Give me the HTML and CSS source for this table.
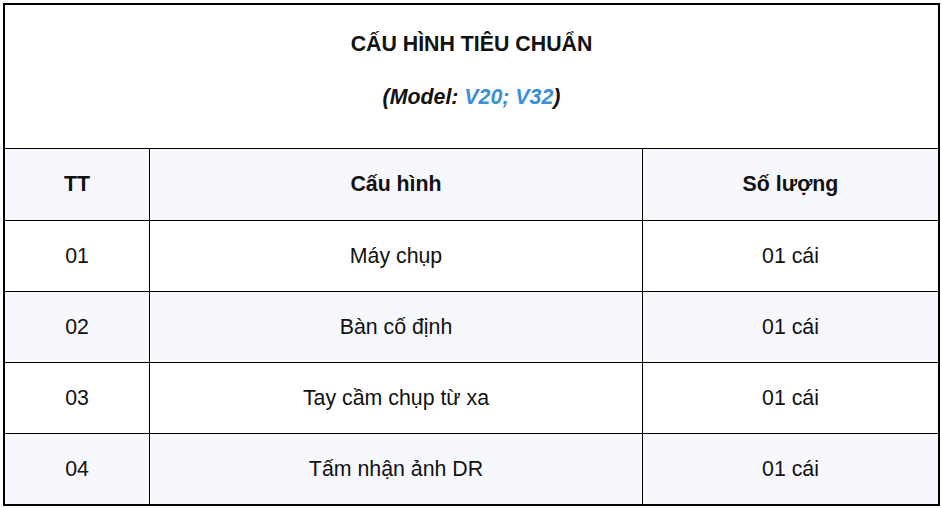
FILE: index.html
```html
<!DOCTYPE html>
<html lang="vi">
<head>
<meta charset="utf-8">
<link rel="stylesheet" href="styles.css">
</head>
<body>
<div class="spec">
  <div class="title">
    <p class="title-main">CẤU HÌNH TIÊU CHUẨN</p>
    <p class="title-sub">(Model: <span class="model">V20; V32</span>)</p>
  </div>
  <div class="grid">
    <div class="cell head tint">TT</div>
    <div class="cell head tint sep">Cấu hình</div>
    <div class="cell head tint sep">Số lượng</div>

    <div class="cell">01</div>
    <div class="cell sep">Máy chụp</div>
    <div class="cell sep">01 cái</div>

    <div class="cell tint">02</div>
    <div class="cell tint sep">Bàn cố định</div>
    <div class="cell tint sep">01 cái</div>

    <div class="cell">03</div>
    <div class="cell sep">Tay cầm chụp từ xa</div>
    <div class="cell sep">01 cái</div>

    <div class="cell tint">04</div>
    <div class="cell tint sep">Tấm nhận ảnh DR</div>
    <div class="cell tint sep">01 cái</div>
  </div>
</div>
</body>
</html>
```
FILE: styles.css
```css
html, body {
  margin: 0;
  padding: 0;
  background: #ffffff;
}
body {
  padding: 3px;
  font-family: "Liberation Sans", Arial, sans-serif;
  color: #111111;
}
.spec {
  box-sizing: border-box;
  width: 937px;
  height: 503px;
  border: 2px solid #000000;
  display: flex;
  flex-direction: column;
}
.title {
  height: 143px;
  box-sizing: border-box;
  padding-top: 27px;
  display: flex;
  flex-direction: column;
  align-items: center;
  gap: 29px;
  font-size: 21.33px;
  font-weight: bold;
  line-height: 24px;
}
.title p {
  margin: 0;
}
.title-sub {
  font-style: italic;
}
.model {
  color: #3a8fd8;
}
.grid {
  display: grid;
  grid-template-columns: 144px 493px 296px;
  grid-template-rows: 72px 71px 71px 71px 71px;
}
.cell {
  box-sizing: border-box;
  border-top: 1px solid #000000;
  display: flex;
  align-items: center;
  justify-content: center;
  font-size: 21.33px;
}
.sep {
  border-left: 1px solid #000000;
}
.head {
  font-weight: bold;
}
.tint {
  background: #f7f7fe;
}
```
